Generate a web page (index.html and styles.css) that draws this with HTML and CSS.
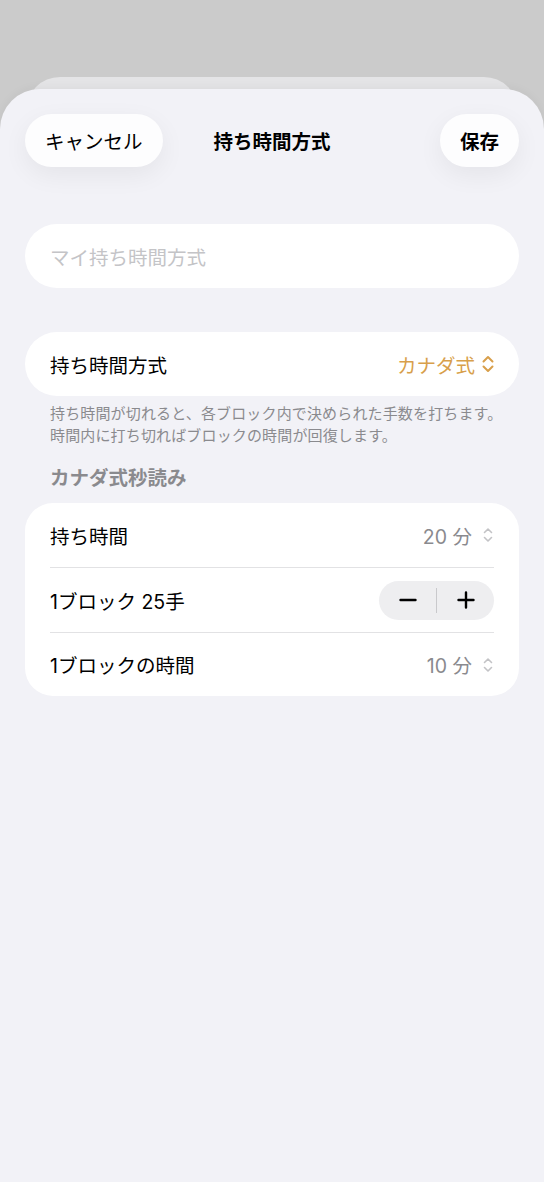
FILE: index.html
```html
<!DOCTYPE html>
<html lang="ja">
<head>
<meta charset="utf-8">
<title>持ち時間方式</title>
<link rel="stylesheet" href="styles.css">
</head>
<body>
<div class="backdrop">
  <div class="back-sheet"></div>
  <div class="sheet">
    <header class="nav">
      <div class="nav-left"><button class="pill">キャンセル</button></div>
      <h1 class="title">持ち時間方式</h1>
      <div class="nav-right"><button class="pill strong">保存</button></div>
    </header>

    <div class="field">マイ持ち時間方式</div>

    <div class="card rounded">
      <div class="row">
        <span class="label">持ち時間方式</span>
        <span class="value accent">カナダ式
          <svg class="chev chev-accent" viewBox="0 0 12 18" width="12" height="18"><path d="M1.5 6.5 L6 2 L10.5 6.5 M1.5 11.5 L6 16 L10.5 11.5" fill="none" stroke="currentColor" stroke-width="2" stroke-linecap="round" stroke-linejoin="round"/></svg>
        </span>
      </div>
    </div>

    <p class="footnote">持ち時間が切れると、各ブロック内で決められた手数を打ちます。<br>時間内に打ち切ればブロックの時間が回復します。</p>

    <h2 class="section">カナダ式秒読み</h2>

    <div class="card group">
      <div class="row">
        <span class="label">持ち時間</span>
        <span class="value muted">20 分
          <svg class="chev chev-muted" viewBox="0 0 10 16" width="10" height="16"><path d="M1.5 5.5 L5 2 L8.5 5.5 M1.5 10.5 L5 14 L8.5 10.5" fill="none" stroke="currentColor" stroke-width="1.6" stroke-linecap="round" stroke-linejoin="round"/></svg>
        </span>
      </div>
      <div class="row">
        <span class="label">1ブロック 25手</span>
        <div class="stepper">
          <span class="step"><svg viewBox="0 0 20 20" width="20" height="20"><path d="M2.5 10 H17.5" stroke="#000" stroke-width="2.4" stroke-linecap="round"/></svg></span>
          <span class="step-div"></span>
          <span class="step"><svg viewBox="0 0 20 20" width="20" height="20"><path d="M2.5 10 H17.5 M10 2.5 V17.5" stroke="#000" stroke-width="2.4" stroke-linecap="round"/></svg></span>
        </div>
      </div>
      <div class="row">
        <span class="label">1ブロックの時間</span>
        <span class="value muted">10 分
          <svg class="chev chev-muted" viewBox="0 0 10 16" width="10" height="16"><path d="M1.5 5.5 L5 2 L8.5 5.5 M1.5 10.5 L5 14 L8.5 10.5" fill="none" stroke="currentColor" stroke-width="1.6" stroke-linecap="round" stroke-linejoin="round"/></svg>
        </span>
      </div>
    </div>
  </div>
</div>
</body>
</html>
```

FILE: styles.css
```css
* { box-sizing: border-box; }
html, body { margin: 0; padding: 0; }
body {
  background: #cbcbcb;
  font-family: "Inter", "Noto Sans CJK JP", sans-serif;
  color: #000;
  height: 1182px;
  overflow: hidden;
}
.backdrop {
  padding-top: 77px;
  display: flex;
  flex-direction: column;
  height: 100%;
}
.back-sheet {
  height: 40px;
  margin: 0 26px;
  background: #e4e4e6;
  border-radius: 34px 34px 0 0;
  flex: none;
}
.sheet {
  margin-top: -28px;
  flex: 1;
  background: #f2f2f7;
  border-radius: 40px 40px 0 0;
  box-shadow: 0 -2px 10px rgba(0,0,0,0.04);
  padding: 25px 25px 0;
}
.nav {
  display: grid;
  grid-template-columns: 1fr auto 1fr;
  align-items: center;
  height: 53px;
}
.nav-right { display: flex; justify-content: flex-end; }
.pill {
  font-family: inherit;
  font-size: 19.5px;
  height: 53px;
  padding: 0 20px;
  border: none;
  border-radius: 27px;
  background: #fdfdfe;
  color: #000;
  box-shadow: 0 8px 26px rgba(0,0,0,0.06);
  letter-spacing: 0;
}
.pill.strong { font-weight: 600; }
.title {
  margin: 0;
  font-size: 19.5px;
  font-weight: 700;
}
.field {
  margin-top: 57px;
  height: 64px;
  border-radius: 32px;
  background: #fff;
  padding-left: 25px;
  display: flex;
  align-items: center;
  font-size: 19.5px;
  color: #c4c4c7;
}
.card {
  background: #fff;
}
.card.rounded {
  margin-top: 44px;
  border-radius: 32px;
}
.card.group {
  margin-top: 12px;
  border-radius: 28px;
}
.row {
  margin: 0 25px;
  height: 64px;
  display: flex;
  align-items: center;
  justify-content: space-between;
  font-size: 19.5px;
}
.group .row + .row {
  border-top: 1px solid #e2e2e4;
  height: 65px;
}
.group .row:last-child { height: 64px; }
.value {
  display: flex;
  align-items: center;
  gap: 7px;
}
.muted { gap: 11px; }
.accent { color: #d89f4b; }
.muted { color: #8a8a8e; }
.chev-muted { color: #c3c3c6; margin-right: 1px; }
.chev { flex: none; }
.footnote {
  margin: 7px 0 0 25px;
  font-size: 15px;
  line-height: 22px;
  color: #8a8a8e;
  letter-spacing: 0.15px;
  white-space: nowrap;
}
.section {
  margin: 18px 25px 0;
  font-size: 19.5px;
  line-height: 26px;
  font-weight: 700;
  color: #8a8a8e;
}
.stepper {
  width: 115px;
  height: 39px;
  border-radius: 20px;
  background: #eeeef0;
  display: flex;
  align-items: center;
}
.step {
  flex: 1;
  display: flex;
  justify-content: center;
  align-items: center;
}
.step-div {
  width: 1px;
  height: 25px;
  background: #c9c9cc;
}
```
